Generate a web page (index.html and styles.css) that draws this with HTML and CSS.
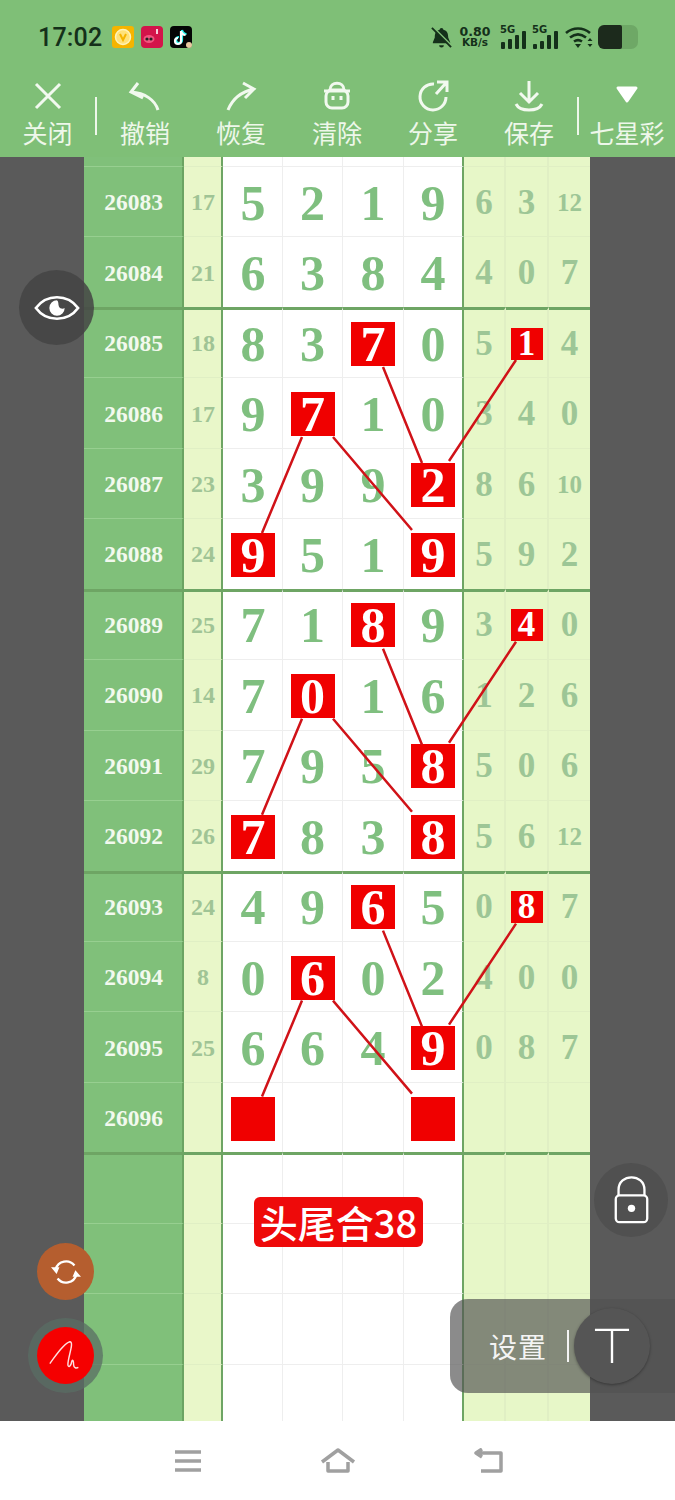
FILE: index.html
```html
<!DOCTYPE html>
<html lang="zh-CN">
<head>
    <meta charset="UTF-8">
    <meta name="viewport" content="width=device-width, initial-scale=1.0">
    <title>七星彩</title>
    <link rel="stylesheet" href="styles.css">
</head>
<body>
    <header class="top">
        <div class="status">
            <span class="clock">17:02</span>
            <div class="apps">
                <svg class="app" viewBox="0 0 22 22"><rect width="22" height="22" rx="3" fill="#f5b400"/><circle cx="11" cy="11" r="7.500" fill="#ffe27a" stroke="#fff3b8" stroke-width="1.500"/><path d="M8 8l3 6 3-6" fill="none" stroke="#f5b400" stroke-width="2"/></svg>
                <svg class="app" viewBox="0 0 22 22"><rect width="22" height="22" rx="4" fill="#d3144a"/><ellipse cx="8" cy="13" rx="5.500" ry="4" fill="#f2557f"/><circle cx="6" cy="13" r="1.600" fill="#222"/><circle cx="10" cy="13" r="1.600" fill="#222"/><path d="M16 3v5" stroke="#fff" stroke-width="1.600"/></svg>
                <svg class="app" viewBox="0 0 22 22"><rect width="22" height="22" rx="4" fill="#050505"/><path d="M12 4v10a3 3 0 1 1-3-3M12 4c.5 2.500 2 4 4.500 4" fill="none" stroke="#25f4ee" stroke-width="2.200"/><path d="M11 5v10a3 3 0 1 1-3-3M11 5c.5 2.500 2 4 4.500 4" fill="none" stroke="#fff" stroke-width="2.200"/><circle cx="19" cy="19" r="3" fill="#e8c9a0"/></svg>
            </div>
            <div class="sys">
                <svg class="bell" viewBox="0 0 24 24"><path d="M12 2a2 2 0 0 1 2 2c4 1 5 4 5 8l2 5v1H3v-1l2-5c0-4 1-7 5-8a2 2 0 0 1 2-2zM9.500 20h5a2.500 2.500 0 0 1-5 0z" fill="#14301a"/><path d="M4 2l18 18" stroke="#7fbf77" stroke-width="2"/><path d="M2 2l20 20" stroke="#14301a" stroke-width="2"/></svg>
                <div class="speed"><b>0.80</b><span>KB/s</span></div>
                <svg class="signal" viewBox="0 0 26 26"><text x="0" y="9" class="sig-text">5G</text><rect x="1" y="18" width="4" height="7" rx="1"/><rect x="8" y="15" width="4" height="10" rx="1"/><rect x="15" y="11" width="4" height="14" rx="1"/><rect x="22" y="7" width="4" height="18" rx="1"/></svg>
                <svg class="signal" viewBox="0 0 26 26"><text x="0" y="9" class="sig-text">5G</text><rect x="1" y="20" width="4" height="5" rx="1"/><rect x="8" y="17" width="4" height="8" rx="1"/><rect x="15" y="11" width="4" height="14" rx="1"/><rect x="22" y="7" width="4" height="18" rx="1"/></svg>
                <svg class="wifi" viewBox="0 0 28 24"><path d="M1 8c7-6 17-6 24 0M5 12.500c5-4 11-4 16 0M9 16.500c3-2 5-2 8 0" fill="none" stroke="#14301a" stroke-width="2.600"/><path d="M10 19h6l-3 4z" fill="#14301a"/><path d="M25 13l2.500 3h-5zM25 22l2.500-3h-5z" fill="#14301a"/></svg>
                <div class="battery"><div class="battery-fill"></div></div>
            </div>
        </div>
        <nav class="tools">
            <div class="tool">
                <svg viewBox="0 0 36 36"><path d="M6 6l24 24M30 6L6 30"/></svg>
                <span>关闭</span>
            </div>
            <div class="sep"></div>
            <div class="tool">
                <svg viewBox="0 0 36 36"><path d="M31 32C28 22 18 15 4 14M11 5L4 14l12 6"/></svg>
                <span>撤销</span>
            </div>
            <div class="tool">
                <svg viewBox="0 0 36 36"><path d="M5 32C9 22 17 14 31 11M20 5l11 6-9 9"/></svg>
                <span>恢复</span>
            </div>
            <div class="tool">
                <svg viewBox="0 0 36 36"><rect x="7" y="12" width="22" height="18" rx="6"/><path d="M5 13h26M11 12c0-9 14-9 14 0M14 18v4M22 18v4"/></svg>
                <span>清除</span>
            </div>
            <div class="tool">
                <svg viewBox="0 0 36 36"><path d="M19 6A13 13 0 1 0 31 19M21 16L31 5M22 4h10v10"/></svg>
                <span>分享</span>
            </div>
            <div class="tool">
                <svg viewBox="0 0 36 36"><path d="M18 3v21M9 15l9 9 9-9M5 26c4 8 22 8 26 0"/></svg>
                <span>保存</span>
            </div>
            <div class="sep"></div>
            <div class="tool">
                <svg viewBox="0 0 36 36"><path class="solid" d="M9 10h18l-9 13z"/></svg>
                <span>七星彩</span>
            </div>
        </nav>
    </header>

    <main class="stage">
        <div class="sheet">
            <div class="row sliver"><div class="no"></div><div class="sum"></div><div class="n"></div><div class="n"></div><div class="n"></div><div class="n end"></div><div class="m"></div><div class="m"></div><div class="m"></div></div>

            <div class="row"><div class="no">26083</div><div class="sum">17</div><div class="n">5</div><div class="n">2</div><div class="n">1</div><div class="n end">9</div><div class="m">6</div><div class="m">3</div><div class="m small">12</div></div>
            <div class="row"><div class="no">26084</div><div class="sum">21</div><div class="n">6</div><div class="n">3</div><div class="n">8</div><div class="n end">4</div><div class="m">4</div><div class="m">0</div><div class="m">7</div></div>

            <div class="row start"><div class="no">26085</div><div class="sum">18</div><div class="n">8</div><div class="n">3</div><div class="n"><b class="hit">7</b></div><div class="n end">0</div><div class="m">5</div><div class="m"><b class="hit tiny">1</b></div><div class="m">4</div></div>
            <div class="row"><div class="no">26086</div><div class="sum">17</div><div class="n">9</div><div class="n"><b class="hit">7</b></div><div class="n">1</div><div class="n end">0</div><div class="m">3</div><div class="m">4</div><div class="m">0</div></div>
            <div class="row"><div class="no">26087</div><div class="sum">23</div><div class="n">3</div><div class="n">9</div><div class="n">9</div><div class="n end"><b class="hit">2</b></div><div class="m">8</div><div class="m">6</div><div class="m small">10</div></div>
            <div class="row"><div class="no">26088</div><div class="sum">24</div><div class="n"><b class="hit">9</b></div><div class="n">5</div><div class="n">1</div><div class="n end"><b class="hit">9</b></div><div class="m">5</div><div class="m">9</div><div class="m">2</div></div>

            <div class="row start"><div class="no">26089</div><div class="sum">25</div><div class="n">7</div><div class="n">1</div><div class="n"><b class="hit">8</b></div><div class="n end">9</div><div class="m">3</div><div class="m"><b class="hit tiny">4</b></div><div class="m">0</div></div>
            <div class="row"><div class="no">26090</div><div class="sum">14</div><div class="n">7</div><div class="n"><b class="hit">0</b></div><div class="n">1</div><div class="n end">6</div><div class="m">1</div><div class="m">2</div><div class="m">6</div></div>
            <div class="row"><div class="no">26091</div><div class="sum">29</div><div class="n">7</div><div class="n">9</div><div class="n">5</div><div class="n end"><b class="hit">8</b></div><div class="m">5</div><div class="m">0</div><div class="m">6</div></div>
            <div class="row"><div class="no">26092</div><div class="sum">26</div><div class="n"><b class="hit">7</b></div><div class="n">8</div><div class="n">3</div><div class="n end"><b class="hit">8</b></div><div class="m">5</div><div class="m">6</div><div class="m small">12</div></div>

            <div class="row start"><div class="no">26093</div><div class="sum">24</div><div class="n">4</div><div class="n">9</div><div class="n"><b class="hit">6</b></div><div class="n end">5</div><div class="m">0</div><div class="m"><b class="hit tiny">8</b></div><div class="m">7</div></div>
            <div class="row"><div class="no">26094</div><div class="sum">8</div><div class="n">0</div><div class="n"><b class="hit">6</b></div><div class="n">0</div><div class="n end">2</div><div class="m">4</div><div class="m">0</div><div class="m">0</div></div>
            <div class="row"><div class="no">26095</div><div class="sum">25</div><div class="n">6</div><div class="n">6</div><div class="n">4</div><div class="n end"><b class="hit">9</b></div><div class="m">0</div><div class="m">8</div><div class="m">7</div></div>
            <div class="row"><div class="no">26096</div><div class="sum"></div><div class="n"><b class="hit"></b></div><div class="n"></div><div class="n"></div><div class="n end"><b class="hit"></b></div><div class="m"></div><div class="m"></div><div class="m"></div></div>

            <div class="row start"><div class="no"></div><div class="sum"></div><div class="n"></div><div class="n"></div><div class="n"></div><div class="n end"></div><div class="m"></div><div class="m"></div><div class="m"></div></div>
            <div class="row"><div class="no"></div><div class="sum"></div><div class="n"></div><div class="n"></div><div class="n"></div><div class="n end"></div><div class="m"></div><div class="m"></div><div class="m"></div></div>
            <div class="row"><div class="no"></div><div class="sum"></div><div class="n"></div><div class="n"></div><div class="n"></div><div class="n end"></div><div class="m"></div><div class="m"></div><div class="m"></div></div>
            <div class="row"><div class="no"></div><div class="sum"></div><div class="n"></div><div class="n"></div><div class="n"></div><div class="n end"></div><div class="m"></div><div class="m"></div><div class="m"></div></div>

            <svg class="links" viewBox="0 0 506 1264">
                <defs>
                    <g id="net">
                        <path d="M299 210L338 306M432 203L365 304M218 280L178 376M249 280L328 373"/>
                    </g>
                </defs>
                <use href="#net"/>
                <use href="#net" y="281.800"/>
                <use href="#net" y="563.600"/>
            </svg>

            <div class="tag">头尾合38</div>
        </div>

        <button class="fab eye">
            <svg viewBox="0 0 48 48"><path d="M2 24c11-15 33-15 44 0-11 15-33 15-44 0z" fill="none" stroke="#fff" stroke-width="2.800"/><path d="M24 16a8 8 0 1 0 8 8c-1.500 1.500-5 1-6-1.500s0-5-2-6.500z" fill="#fff"/></svg>
        </button>
        <button class="fab lock">
            <svg viewBox="0 0 40 54"><rect x="3" y="22" width="34" height="29" rx="4" fill="none" stroke="#fff" stroke-width="2.500"/><path d="M6 22v-6c0-18 28-18 28 0v6" fill="none" stroke="#fff" stroke-width="2.500"/><circle cx="20" cy="36" r="4" fill="#fff"/></svg>
        </button>
        <button class="fab sync">
            <svg viewBox="0 0 32 32"><path d="M5 13A11.500 11.500 0 0 1 25 9M27 19A11.500 11.500 0 0 1 7 23" fill="none" stroke="#fff" stroke-width="2.500"/><path d="M0 11l9 0-3 7zM32 21l-9 0 3-7z" fill="#fff"/></svg>
        </button>
        <div class="pen-ring">
            <button class="pen">
                <svg viewBox="0 0 40 40"><path d="M3 28C9 20 17 7 24 5c5 0-2 16-2 24 0 3 3 3 4-3 1-3 2-1 2 3 0 4 3 4 5 3" fill="none" stroke="#ffe0e0" stroke-width="1.500"/></svg>
            </button>
        </div>
        <div class="panel">
            <span class="panel-text">设置</span>
            <span class="panel-bar"></span>
            <div class="panel-t">
                <svg viewBox="0 0 38 38"><path d="M1 2h36M19 2v35" fill="none" stroke="#fff" stroke-width="2.500"/></svg>
            </div>
        </div>
    </main>

    <footer class="nav">
        <svg viewBox="0 0 30 24"><path d="M2 3h26M2 12h26M2 21h26"/></svg>
        <svg viewBox="0 0 36 26"><path d="M2 14L18 2l16 12M8 14v9h20v-9"/></svg>
        <svg viewBox="0 0 30 26"><path d="M3 5h25v18H8M9 1L3 5l6 4"/></svg>
    </footer>
</body>
</html>
```

FILE: styles.css
```css
* {
    box-sizing: border-box;
}

body {
    margin: 0;
    width: 675px;
    height: 1500px;
    overflow: hidden;
    background: #fff;
    font-family: "Noto Sans CJK SC", "Noto Sans", sans-serif;
}

/* status bar + toolbar */
.top {
    height: 157px;
    background: #7fbf77;
}

.status {
    height: 78px;
    display: flex;
    align-items: center;
    padding: 0 37px 4px 38px;
    color: #14301a;
}

.clock {
    font-family: Roboto, sans-serif;
    font-size: 25px;
    font-weight: 500;
    letter-spacing: 0.2px;
}

.apps {
    display: flex;
    gap: 7px;
    margin-left: 10px;
}

.app {
    width: 22px;
    height: 22px;
}

.sys {
    display: flex;
    align-items: center;
    margin-left: auto;
}

.bell {
    width: 23px;
    height: 23px;
}

.speed {
    display: flex;
    flex-direction: column;
    align-items: center;
    width: 32px;
    margin-left: 6px;
    font-family: "DejaVu Sans", sans-serif;
    line-height: 11px;
}

.speed b {
    font-size: 12.5px;
}

.speed span {
    font-size: 10.5px;
    font-weight: 700;
}

.signal {
    width: 26px;
    height: 26px;
    margin-left: 9px;
    fill: #14301a;
}

.signal + .signal {
    margin-left: 6px;
}

.sig-text {
    font-family: "DejaVu Sans", sans-serif;
    font-size: 10px;
    font-weight: 700;
}

.wifi {
    width: 28px;
    height: 24px;
    margin-left: 7px;
}

.battery {
    width: 40px;
    height: 24px;
    margin-left: 5px;
    border-radius: 7px;
    background: #6ea866;
}

.battery-fill {
    width: 24px;
    height: 24px;
    border-radius: 6px 2px 2px 6px;
    background: #1c2a1c;
}

.tools {
    display: flex;
    align-items: flex-start;
}

.tool {
    flex: 0 0 96px;
    display: flex;
    flex-direction: column;
    align-items: center;
    color: #eef7ea;
}

.tool:first-child {
    flex-basis: 95px;
}

.tool svg {
    width: 36px;
    height: 36px;
    fill: none;
    stroke: #f2f9ef;
    stroke-width: 3;
}

.tool .solid {
    fill: #fff;
    stroke: #fff;
    stroke-linejoin: round;
}

.tool span {
    font-size: 25px;
    line-height: 36px;
    white-space: nowrap;
}

.sep {
    flex: 0 0 2px;
    height: 38px;
    margin-top: 19px;
    background: #eef7ea;
}

/* middle area */
.stage {
    position: relative;
    height: 1264px;
    overflow: hidden;
    background: #5a5a5a;
}

.sheet {
    position: relative;
    width: 506px;
    height: 1264px;
    margin-left: 84px;
    overflow: hidden;
}

.row {
    display: grid;
    grid-template-columns: 100px 39px 60px 60px 61px 60px 42px 43px 41px;
    height: 70.46px;
    font-family: "Liberation Serif", serif;
    font-weight: 700;
}

.row.sliver {
    height: 10px;
}

.row > div {
    display: flex;
    align-items: center;
    justify-content: center;
    padding-top: 2px;
    border-bottom: 1px solid #eeeeee;
    white-space: nowrap;
}

.row.start > div {
    padding-top: 0;
    border-top: 3px solid #6ea564;
    margin-top: -1px;
}

.no {
    background: #80c07a;
    color: #f2f9ee;
    font-size: 23.5px;
    padding-left: 1px;
    border-right: 2px solid #6ba462;
    border-bottom-color: #97cf90 !important;
}

.sum {
    background: #e9f7c9;
    color: #a0c495;
    font-size: 24px;
    padding-left: 1px;
    border-right: 2px solid #6ea564;
    border-bottom-color: #e0efc4 !important;
}

.n {
    background: #fff;
    color: #7fbf7f;
    font-size: 50px;
    border-right: 1px solid #eeeeee;
}

.sum + .n {
    padding-left: 1px;
}

.n.end {
    border-right: 2px solid #6ea564;
}

.m {
    background: #e7f7c8;
    color: #9dc696;
    font-size: 35px;
    border-right: 2px solid #e0efc4;
    border-bottom-color: #e0efc4 !important;
}

.m:last-child {
    border-right: 0;
}

.m.small {
    font-size: 25px;
}

.hit {
    display: flex;
    align-items: center;
    justify-content: center;
    width: 44px;
    height: 44px;
    background: #f00000;
    color: #fff;
    font-weight: 700;
}

.hit.tiny {
    width: 32px;
    height: 32px;
}

.links {
    position: absolute;
    left: 0;
    top: 0;
    width: 506px;
    height: 1264px;
    fill: none;
    stroke: #d01218;
    stroke-width: 2.5;
}

.tag {
    position: absolute;
    left: 170px;
    top: 1040px;
    width: 169px;
    height: 50px;
    border-radius: 6px;
    background: #ee0a0a;
    color: #fff;
    font-size: 38px;
    font-weight: 500;
    line-height: 50px;
    text-align: center;
    white-space: nowrap;
}

/* floating buttons */
.fab {
    position: absolute;
    display: flex;
    align-items: center;
    justify-content: center;
    padding: 0;
    border: 0;
    border-radius: 50%;
}

.eye {
    left: 19px;
    top: 113px;
    width: 75px;
    height: 75px;
    background: rgba(68, 68, 68, 0.85);
}

.eye svg {
    width: 46px;
    height: 46px;
}

.lock {
    left: 594px;
    top: 1006px;
    width: 74px;
    height: 74px;
    background: #505050;
}

.lock svg {
    width: 37px;
    height: 50px;
}

.sync {
    left: 37px;
    top: 1086px;
    width: 57px;
    height: 57px;
    background: #b55e2f;
}

.sync svg {
    width: 30px;
    height: 30px;
}

.pen-ring {
    position: absolute;
    left: 28px;
    top: 1161px;
    width: 75px;
    height: 75px;
    padding: 9px;
    border-radius: 50%;
    background: rgba(90, 110, 100, 0.75);
}

.pen {
    display: flex;
    align-items: center;
    justify-content: center;
    width: 57px;
    height: 57px;
    padding: 0;
    border: 0;
    border-radius: 50%;
    background: #f50000;
}

.pen svg {
    width: 38px;
    height: 38px;
}

.panel {
    position: absolute;
    left: 450px;
    top: 1142px;
    width: 225px;
    height: 94px;
    display: flex;
    align-items: center;
    padding-left: 39px;
    border-radius: 18px 0 0 18px;
    background: rgba(82, 82, 82, 0.67);
}

.panel-text {
    color: #f4f4f4;
    font-size: 28px;
    letter-spacing: 1px;
}

.panel-bar {
    width: 2px;
    height: 32px;
    margin-left: 20px;
    background: #f4f4f4;
}

.panel-t {
    display: flex;
    align-items: center;
    justify-content: center;
    width: 76px;
    height: 76px;
    margin-left: 5px;
    border-radius: 50%;
    background: #555;
    box-shadow: 0 1px 3px rgba(0, 0, 0, 0.35);
}

.panel-t svg {
    width: 36px;
    height: 36px;
}

/* navigation bar */
.nav {
    height: 79px;
    display: flex;
    align-items: center;
    padding: 0 172px 0 173px;
    justify-content: space-between;
    background: #fff;
}

.nav svg {
    width: 30px;
    height: 26px;
    fill: none;
    stroke: #a0a0a0;
    stroke-width: 3.5;
    stroke-linejoin: round;
}

.nav svg:nth-child(2) {
    width: 36px;
}
```
